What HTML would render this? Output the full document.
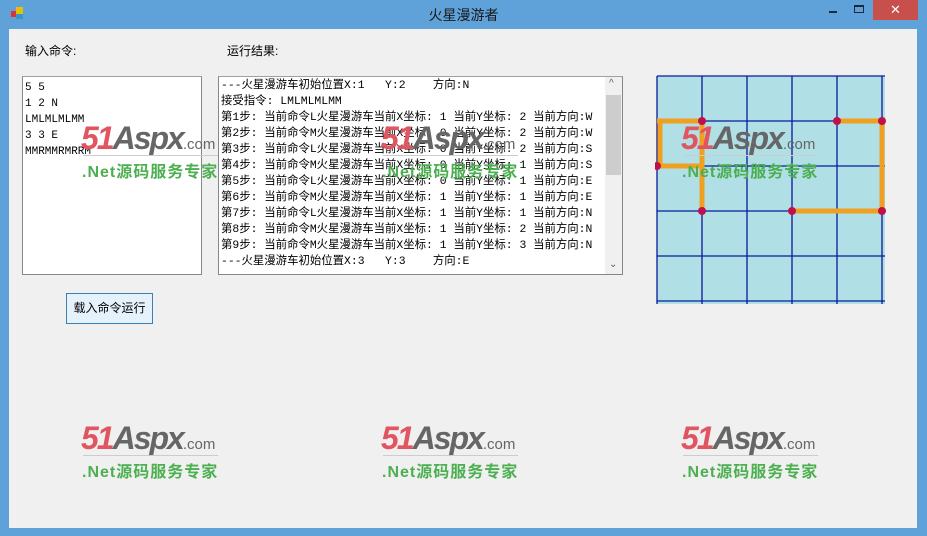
<!DOCTYPE html>
<html><head><meta charset="utf-8"><style>
*{margin:0;padding:0;box-sizing:border-box}
body{width:927px;height:536px;background:#5fa2da;position:relative;overflow:hidden;font-family:"Liberation Sans","Noto Sans CJK SC",sans-serif;font-size:12px;color:#000}
.title{position:absolute;left:0;top:5px;width:927px;text-align:center;font-size:14px;color:#1a1a1a}
.close{position:absolute;left:873px;top:0;width:45px;height:20px;background:#c7504c;color:#fff;text-align:center;font-size:13px;line-height:20px}
.client{position:absolute;left:9px;top:29px;width:908px;height:499px;background:#f0f0f0}
.abs{position:absolute}
.box{position:absolute;background:#fff;border:1px solid #828790;border-top-color:#a0a0a0}
.mono{font-family:"Liberation Mono","Noto Sans CJK SC",monospace;font-size:11px;line-height:16px}
.btn{position:absolute;left:66px;top:293px;width:87px;height:31px;border:1px solid #3c7fb1;background:#e5f1fb;text-align:center;line-height:29px;font-size:12px}
.wm{position:absolute;width:150px;height:60px}
.wm .l1{position:absolute;left:0;top:-2px;font:italic bold 32px "Liberation Sans",sans-serif;letter-spacing:-2px;white-space:nowrap}
.wm .l2{position:absolute;left:1px;top:36px;font-size:16px;font-weight:bold;color:#4caf50;letter-spacing:1px;white-space:nowrap;font-family:"Liberation Sans","Noto Sans CJK SC",sans-serif}
.wm .ln{position:absolute;left:2px;top:33px;width:135px;height:1px;background:#ccc}
</style></head><body>
<svg class="abs" style="left:11px;top:7px" width="14" height="14"><rect x="0" y="4" width="6" height="6" fill="#d33"/><rect x="5" y="0" width="7" height="7" fill="#e8c000"/><rect x="5" y="7" width="7" height="5" fill="#39c"/></svg>
<div class="title">火星漫游者</div>
<div class="abs" style="left:829px;top:11px;width:8px;height:2px;background:#1a2a3a"></div>
<div class="abs" style="left:854px;top:5px;width:10px;height:8px;border:1px solid #1a2a3a;border-top-width:2px"></div>
<div class="close">✕</div>
<div class="client"></div>
<div class="abs" style="left:25px;top:42px">输入命令:</div>
<div class="abs" style="left:227px;top:42px">运行结果:</div>
<div class="box mono" style="left:22px;top:76px;width:180px;height:199px;padding:3px 2px">5 5<br>1 2 N<br>LMLMLMLMM<br>3 3 E<br>MMRMMRMRRM</div>
<div class="box mono" style="left:218px;top:76px;width:405px;height:199px;padding:1px 2px;overflow:hidden;white-space:nowrap;font-size:11.4px">---火星漫游车初始位置X:1&nbsp;&nbsp;&nbsp;Y:2&nbsp;&nbsp;&nbsp;&nbsp;方向:N<br>接受指令: LMLMLMLMM<br>第1步: 当前命令L火星漫游车当前X坐标: 1 当前Y坐标: 2 当前方向:W<br>第2步: 当前命令M火星漫游车当前X坐标: 0 当前Y坐标: 2 当前方向:W<br>第3步: 当前命令L火星漫游车当前X坐标: 0 当前Y坐标: 2 当前方向:S<br>第4步: 当前命令M火星漫游车当前X坐标: 0 当前Y坐标: 1 当前方向:S<br>第5步: 当前命令L火星漫游车当前X坐标: 0 当前Y坐标: 1 当前方向:E<br>第6步: 当前命令M火星漫游车当前X坐标: 1 当前Y坐标: 1 当前方向:E<br>第7步: 当前命令L火星漫游车当前X坐标: 1 当前Y坐标: 1 当前方向:N<br>第8步: 当前命令M火星漫游车当前X坐标: 1 当前Y坐标: 2 当前方向:N<br>第9步: 当前命令M火星漫游车当前X坐标: 1 当前Y坐标: 3 当前方向:N<br>---火星漫游车初始位置X:3&nbsp;&nbsp;&nbsp;Y:3&nbsp;&nbsp;&nbsp;&nbsp;方向:E</div>
<div class="abs" style="left:605px;top:77px;width:17px;height:197px;background:#f0f0f0"></div>
<div class="abs" style="left:606px;top:95px;width:15px;height:80px;background:#cdcdcd"></div>
<div class="abs" style="left:609px;top:78px;font-size:10px;color:#606060">^</div>
<div class="abs" style="left:609px;top:259px;font-size:10px;color:#606060">⌄</div>
<div class="btn">载入命令运行</div>
<svg class="abs" style="left:655px;top:74px" width="232" height="232">
<rect x="2" y="2" width="228" height="228" fill="#b0dfe6"/>
<g stroke="#0a1a9a" stroke-width="1.3">
<line x1="2" y1="2" x2="2" y2="230"/><line x1="47" y1="2" x2="47" y2="230"/><line x1="92" y1="2" x2="92" y2="230"/><line x1="137" y1="2" x2="137" y2="230"/><line x1="182" y1="2" x2="182" y2="230"/><line x1="227" y1="2" x2="227" y2="230"/>
<line x1="2" y1="2" x2="230" y2="2"/><line x1="2" y1="47" x2="230" y2="47"/><line x1="2" y1="92" x2="230" y2="92"/><line x1="2" y1="137" x2="230" y2="137"/><line x1="2" y1="182" x2="230" y2="182"/><line x1="2" y1="227" x2="230" y2="227"/>
</g>
<g stroke="#f0a020" stroke-width="5" fill="none">
<path d="M2 47 H47 V137"/><path d="M5 47 V92 H47"/>
<path d="M137 137 H227 V47 H182"/>
</g>
<g fill="#c0104a"><circle cx="47" cy="47" r="4"/><circle cx="2" cy="92" r="4"/><circle cx="47" cy="137" r="4"/><circle cx="182" cy="47" r="4"/><circle cx="227" cy="47" r="4"/><circle cx="227" cy="137" r="4"/><circle cx="137" cy="137" r="4"/></g>
</svg>
<div class="wm" style="left:81px;top:122px"><div class="l1"><span style="color:#e05560">51</span><span style="color:#666">Aspx</span><span style="color:#666;font-size:15px;font-style:normal;font-weight:normal;letter-spacing:0">.com</span></div><div class="ln"></div><div class="l2">.Net源码服务专家</div></div>
<div class="wm" style="left:381px;top:122px"><div class="l1"><span style="color:#e05560">51</span><span style="color:#666">Aspx</span><span style="color:#666;font-size:15px;font-style:normal;font-weight:normal;letter-spacing:0">.com</span></div><div class="ln"></div><div class="l2">.Net源码服务专家</div></div>
<div class="wm" style="left:681px;top:122px"><div class="l1"><span style="color:#e05560">51</span><span style="color:#666">Aspx</span><span style="color:#666;font-size:15px;font-style:normal;font-weight:normal;letter-spacing:0">.com</span></div><div class="ln"></div><div class="l2">.Net源码服务专家</div></div>
<div class="wm" style="left:81px;top:422px"><div class="l1"><span style="color:#e05560">51</span><span style="color:#666">Aspx</span><span style="color:#666;font-size:15px;font-style:normal;font-weight:normal;letter-spacing:0">.com</span></div><div class="ln"></div><div class="l2">.Net源码服务专家</div></div>
<div class="wm" style="left:381px;top:422px"><div class="l1"><span style="color:#e05560">51</span><span style="color:#666">Aspx</span><span style="color:#666;font-size:15px;font-style:normal;font-weight:normal;letter-spacing:0">.com</span></div><div class="ln"></div><div class="l2">.Net源码服务专家</div></div>
<div class="wm" style="left:681px;top:422px"><div class="l1"><span style="color:#e05560">51</span><span style="color:#666">Aspx</span><span style="color:#666;font-size:15px;font-style:normal;font-weight:normal;letter-spacing:0">.com</span></div><div class="ln"></div><div class="l2">.Net源码服务专家</div></div>
</body></html>
